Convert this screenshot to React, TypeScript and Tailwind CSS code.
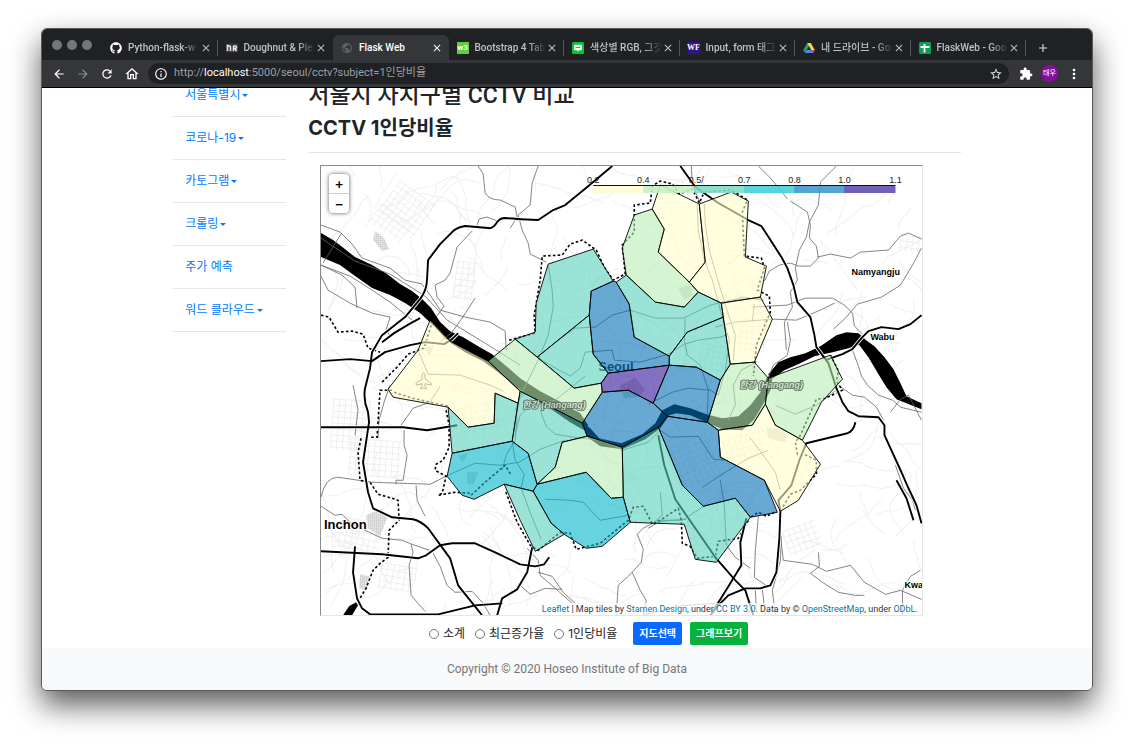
import React from "react";
import { FaGithub } from "react-icons/fa";
import {
  MdArrowBack,
  MdArrowForward,
  MdRefresh,
  MdOutlineHome,
  MdInfoOutline,
  MdStarBorder,
  MdExtension,
  MdMoreVert,
  MdClose,
  MdAdd,
  MdPublic,
} from "react-icons/md";

/* ---------- map data ---------- */

const YELLOW = "#ffffcc";
const GREEN = "#b9ecb2";
const TEAL = "#5ad0bc";
const CYAN = "#00b6ca";
const BLUE = "#0370b8";
const PURPLE = "#341399";

const districts: { name: string; fill: string; points: string }[] = [
  { name: "은평구", fill: TEAL, points: "548,264 593,249 613,281 591,291 589,315 537,357 515,339 535,332 536,303" },
  { name: "서대문구", fill: TEAL, points: "589,315 593,354 608,373 601,383 574,388 537,357" },
  { name: "종로구", fill: BLUE, points: "613,281 616,282 629,304 634,337 669,356 669,365 608,373 593,354 589,315 591,291" },
  { name: "강북구", fill: GREEN, points: "634,215 652,209 664,229 658,252 689,282 698,292 684,307 655,302 626,275 622,248" },
  { name: "도봉구", fill: YELLOW, points: "652,209 660,185 699,204 705,262 689,282 658,252 664,229" },
  { name: "노원구", fill: YELLOW, points: "699,204 731,192 748,201 745,257 766,266 760,297 721,303 698,292 689,282 705,262" },
  { name: "성북구", fill: TEAL, points: "616,282 626,275 655,302 684,307 698,292 721,303 723,317 687,332 669,356 634,337 629,304" },
  { name: "동대문구", fill: TEAL, points: "687,332 723,317 730,364 720,380 696,367 669,365 669,356" },
  { name: "중랑구", fill: YELLOW, points: "721,303 760,297 772,319 754,362 730,364 723,317" },
  { name: "광진구", fill: GREEN, points: "730,364 754,362 768,378 765,404 752,425 718,430 707,422 720,380" },
  { name: "강동구", fill: GREEN, points: "768,378 830,355 842,379 821,402 802,440 775,425 765,404" },
  { name: "송파구", fill: YELLOW, points: "765,404 775,425 802,440 820,464 798,500 780,511 764,480 720,457 718,430 752,425" },
  { name: "강남구", fill: BLUE, points: "658,427 667,416 707,422 718,430 720,457 764,480 777,512 750,517 735,498 703,506 682,485" },
  { name: "서초구", fill: TEAL, points: "658,427 682,485 703,506 735,498 750,517 747,521 716,562 695,559 684,524 630,522 623,497 622,447" },
  { name: "용산구", fill: BLUE, points: "602,392 628,390 653,403 667,416 658,427 622,447 587,436 582,423" },
  { name: "중구", fill: PURPLE, points: "608,373 669,365 653,403 628,390 602,392 601,383" },
  { name: "성동구", fill: BLUE, points: "669,365 696,367 720,380 707,422 667,416 653,403" },
  { name: "마포구", fill: GREEN, points: "515,339 537,357 574,388 601,383 602,392 582,423 520,391 488,361" },
  { name: "강서구", fill: YELLOW, points: "430,320 450,341 488,361 520,391 518,403 495,393 494,423 468,427 448,407 393,397 388,389 418,350" },
  { name: "양천구", fill: TEAL, points: "495,393 518,403 512,441 452,453 448,407 468,427 494,423" },
  { name: "구로구", fill: CYAN, points: "452,453 512,441 528,453 537,484 533,491 504,484 474,499 462,495 447,476" },
  { name: "영등포구", fill: TEAL, points: "518,403 520,391 582,423 587,436 562,442 555,467 537,484 528,453 512,441" },
  { name: "동작구", fill: GREEN, points: "587,436 622,447 623,497 611,498 586,472 537,484 555,467 562,442" },
  { name: "관악구", fill: CYAN, points: "533,491 537,484 586,472 611,498 623,497 630,522 602,546 586,548 564,534 551,523" },
  { name: "금천구", fill: TEAL, points: "504,484 533,491 551,523 564,534 535,551 520,520" },
];

const riverShapes = [
  "321,233 333,240 341,246 355,257 372,265 387,274 400,284 412,291 422,299 431,308 440,322 450,331 463,337 478,346 492,354 505,365 520,378 540,391 561,402 580,413 588,425 584,430 570,422 548,407 530,396 516,387 498,372 483,361 465,352 448,341 434,326 420,313 405,303 390,295 372,288 355,276 340,265 321,257",
  "584,424 590,428 599,438 621,443 642,434 655,423 662,410 674,404 690,408 706,414 722,418 738,416 750,405 760,392 766,378 771,374 772,386 764,402 754,419 742,430 722,429 706,422 690,415 676,413 669,415 660,428 645,439 622,449 600,446 586,436",
  "768,374 778,362 790,357 805,353 820,346 836,335 846,332 858,333 864,338 860,344 848,348 832,352 814,356 800,363 784,370 770,380",
  "856,341 863,338 874,346 884,357 893,369 900,383 906,396 921,403 921,409 906,403 896,399 886,387 878,374 868,357",
  "343,615 349,606 356,602 358,605 352,615",
];

const highways = [
  "M520 219 L505 218 Q500 218 497 222 Q493 229 488 228 L465 226 Q458 227 453 231 L440 244 L428 260 L427 278 Q427 290 420 299 L405 317 L382 335 L372 352 L370 368 L365 388 Q363 400 368 412 L369 422 L363 462 L368 492 L373 508 L392 517 L413 519 Q421 521 428 528 L450 558 L458 585 L482 615",
  "M515 219 L538 220 L553 210 L565 205 L587 187 L612 166",
  "M680 166 L695 187 L718 203 L748 220 L761 226 L772 243 L781 257 L787 268 L793 285 L797 302 L810 317 L814 335 L816 347 L828 363 L836 388 L842 402 L848 411 L858 416 L878 417 L884 425 L884 435 L901 472 L908 488 L916 505 L921 523",
  "M321 361 L350 359 L372 361 L385 352 L410 345 L425 342 L444 344 L452 339 L458 333",
  "M321 427 L403 427 L427 430 L457 425",
  "M321 551 L382 554 L418 558 L426 555 L440 545 L452 543 L475 543 L495 552 L520 564 L535 566 L544 564 L549 557",
  "M355 546 L353 572 L357 598 L362 608 L370 614 L438 614 L475 605 L502 603",
  "M497 615 L502 598 L517 589 L527 572 L532 547",
  "M780 511 L779 538 L776 572 L770 585 L760 588 L745 588 L728 595 L718 605 L710 615",
  "M658 435 L664 465 L675 499 L715 557 L735 580 L745 590 L753 615",
  "M746 518 L740 542 L741 565 L730 583 L712 612",
  "M855 422 Q853 431 847 433 L806 443 L799 460 L791 485 L778 500 L780 511",
  "M825 360 L842 354 L852 349 L861 338 L868 331 L881 327 L898 329 L910 324 L921 315",
  "M382 342 L394 333 L409 324 L420 318",
  "M896 480 L906 498 L913 520",
];

const roads = [
  "M478 166 L483 174 L485 193 Q489 200 500 200 L515 207 L517 217 L510 228",
  "M538 166 L532 183 L530 205 L518 215 L522 230 L528 243 L530 254 L546 262",
  "M476 228 L479 219 L487 217 L500 222",
  "M472 231 L457 247 L450 273 L445 280 L435 285 L437 297 L444 306 L436 317",
  "M321 225 L340 232 L352 244 L362 258 L390 268 L405 280 L422 284 L430 295 L440 310 L465 317 L490 322 L505 331 L506 350",
  "M321 238 L355 261 L390 274 L425 296 L447 320 L480 340 L520 365",
  "M321 265 L350 276 L372 290 L390 302 L412 320",
  "M321 276 L328 290 L350 303 L372 313 L390 317 L386 330 L391 337",
  "M321 265 L342 275 L355 287 L357 308",
  "M323 263 L341 234",
  "M475 298 L462 318 L452 332 L440 342",
  "M418 350 L428 374 L460 375 L490 385 L503 391",
  "M321 497 Q325 477 338 477 L372 482 L430 484 L448 475 L475 463 L500 465 L519 462 L540 449 L565 440",
  "M404 430 L404 445 L407 455 L403 480 L396 480 L396 484",
  "M401 425 L413 408 L430 402 L440 386",
  "M416 485 L417 500 L425 516",
  "M321 506 L335 515 L342 514 L350 522 L365 530 L382 538 L402 540 L412 544 L432 551 L440 566 L447 585 L455 592 L472 591 L483 603 L490 615",
  "M411 544 L413 552 L409 565 L411 595 L425 611",
  "M390 385 L384 402 L379 420 L378 438",
  "M353 385 L358 410 L355 435",
  "M548 265 L552 290 L553 307 L548 335 L538 360 L523 390 L515 410",
  "M537 357 L550 365 L570 376 L580 368 L585 352 L612 350 L614 360 L640 362 L668 354 L684 344 L698 340 L720 337 L728 334",
  "M558 340 L575 328 L595 327 L612 315 L630 310 L655 318 L683 318 L710 305 L730 300 L760 298",
  "M685 318 L684 340 L687 355 L700 365 L708 390 L707 415",
  "M697 204 L698 230 L704 260 L712 280 L720 310 L729 340 L725 370 L718 395",
  "M704 204 L705 225 L709 250 L716 275 L725 305 L735 335 L733 360",
  "M691 166 L692 185 L700 203",
  "M758 166 L770 178 L780 190 L787 199",
  "M836 166 L820 182 L818 205 L809 222 L806 237 L799 250 L795 268 L797 280 L790 292 L792 307 L784 322 L786 350",
  "M790 201 L807 212 L810 225 L809 238 L816 246 L818 258 L810 266 L798 266 L790 263 L779 265 L769 271 L764 281",
  "M817 257 L830 254 L850 258 L860 252 L888 250 L900 236 L908 233 L921 239",
  "M921 248 L912 265 L900 285 L881 297 L857 304 L845 318 L833 329",
  "M752 307 L787 305 L805 298 L832 298 L844 305 L852 313 L854 326 L862 334",
  "M772 319 L796 320 L820 310 L834 303",
  "M721 304 L742 297 L763 300",
  "M715 327 L735 322 L772 319",
  "M754 304 L752 321",
  "M768 378 L773 365 L787 355 L790 340 L787 322",
  "M852 350 L858 366 L861 376 L867 385 L878 395 L892 400 L900 407 L921 412",
  "M838 385 L852 395 L864 397 L876 407 L883 420",
  "M890 412 L900 399 L908 395 L921 420",
  "M540 410 L546 426 L555 434 L580 438 L605 440 L622 450 L648 442 L660 430",
  "M515 435 L520 415 L530 405 L555 400 L585 376",
  "M512 441 L515 460 L524 474 L521 488 L531 515 L541 539",
  "M502 470 L506 455 L515 440 L517 418",
  "M657 428 L670 437 L698 436 L713 459 L724 460",
  "M705 505 L682 520 L657 520 L643 528 L637 534 L643 549 L641 562 L628 576 L618 585 L616 615",
  "M655 521 L662 515 L660 492",
  "M648 528 L658 522 L670 520 L686 519",
  "M632 572 L640 590 L646 600 L643 615",
  "M527 548 L538 560 L540 575 L555 588 L572 603",
  "M538 572 L552 576 L563 592 L575 603",
  "M520 585 L530 594 L545 588 L562 589",
  "M702 487 L725 472 L748 458 L768 450",
  "M749 437 L760 451 L775 472 L780 490",
  "M728 420 L735 405 L733 385 L741 370 L756 362",
  "M775 405 L795 414 L816 405 L836 390",
  "M720 480 L724 505 L726 545 L735 557 L750 568",
  "M758 516 L755 550 L754 577 L767 586",
  "M781 536 L780 560 L772 590 L775 615",
  "M780 536 L783 560 L812 564 L826 571 L850 565 L864 582 L885 594 L900 590 L921 599",
  "M818 552 L819 566 L810 573 L822 582 L838 592 L855 595 L864 595",
  "M902 615 L902 590 L910 576 L920 570",
  "M755 590 L756 610 M762 589 L765 615",
  "M895 465 L903 488 L912 500 L915 510",
  "M643 615 L665 609 L682 605 L715 603",
  "M648 404 L672 392 L688 388 L710 390 L718 395",
  "M545 499 L571 500 L583 502 L600 520 L628 515",
];

const borders = [
  "M321 315 L329 317 L338 332 L352 331 L363 334 L368 348 L380 352",
  "M382 382 L398 366 L408 354 L424 348 L432 322",
  "M392 390 L380 390 L377 437 L370 437",
  "M394 392 L412 398 L448 406",
  "M446 410 L449 425 L449 447 L443 460 L436 464 L435 470 L446 476 L442 493 L438 495 L455 492 L471 493",
  "M361 438 L358 452 L360 480 L370 482 L378 494 L392 498 L398 500 L399 520 L389 530 L388 557 L380 563 L373 570 L366 588 L358 601",
  "M509 340 L535 333 L534 315 L540 280 L542 256 L562 255 L570 244 L582 240 L596 250 L604 267 L613 280 L625 274 L622 245 L634 232 L634 205 L650 203 L652 186 L660 181 L672 184 L679 194 L692 189 L699 203 L704 192 L731 190 L747 200 L742 212 L744 256 L761 258 L764 268 L757 290 L769 296 L770 312 L756 345 L753 376",
  "M830 355 L838 371 L836 381 L842 390 L825 398 L816 399 L800 435 L795 442 L797 454 L806 455 L816 460 L816 474 L800 490 L790 494 L780 511",
  "M774 512 L766 516 L758 512 L750 517",
  "M748 520 L738 538 L718 541 L715 556 L697 558 L690 546 L682 543 L681 520 L678 508 L660 520 L652 524 L643 506 L633 507 L628 520 L612 533 L600 543 L576 549 L570 533 L560 532 L538 550 L530 545 L517 522 L505 490",
  "M471 495 L485 482 L505 465 L511 475",
];

const parks = [
  "375,231 384,238 389,249 382,251 373,240",
  "366,515 382,508 387,518 380,536 368,528",
  "360,574 369,576 367,590 359,588",
  "678,288 690,285 692,295 684,300",
  "619,386 635,377 645,390 637,397 624,398",
  "766,427 784,430 785,442 768,438",
  "458,455 468,453 462,463",
  "467,472 478,472 474,484 467,484",
  "425,348 434,345 429,356",
  "520,385 530,390 522,397",
];

/* Faint side streets: short walks from a fixed seed, so every render is alike. */
function sideStreets(): string {
  let seed = 1907;
  const rnd = () => {
    seed = (seed * 16807) % 2147483647;
    return seed / 2147483647;
  };
  const parts: string[] = [];
  for (let i = 0; i < 300; i++) {
    let x = 325 + rnd() * 590;
    let y = 170 + rnd() * 440;
    let a = rnd() * Math.PI * 2;
    let d = `M${x.toFixed(0)} ${y.toFixed(0)}`;
    const steps = 3 + Math.floor(rnd() * 6);
    for (let s = 0; s < steps; s++) {
      a += (rnd() - 0.5) * 1.1;
      x += Math.cos(a) * 9;
      y += Math.sin(a) * 9;
      d += ` L${x.toFixed(1)} ${y.toFixed(1)}`;
    }
    parts.push(d);
  }
  return parts.join(" ");
}

const sideStreetPath = sideStreets();

/* Gridded neighbourhoods: x, y, width, height, turn */
const blocks = [
  [385, 190, 44, 38, 35],
  [372, 212, 36, 22, 35],
  [332, 400, 38, 50, 4],
  [350, 440, 50, 36, 4],
  [455, 262, 18, 38, 8],
  [672, 440, 44, 46, -22],
  [725, 436, 36, 26, -15],
  [785, 525, 34, 26, -20],
  [340, 520, 40, 30, 12],
  [460, 405, 40, 26, -10],
  [700, 345, 24, 26, 10],
  [740, 320, 26, 30, 4],
  [900, 236, 20, 16, 8],
  [380, 565, 34, 26, 10],
];

const legend = [
  { x: 593, fill: "#fffcd0" },
  { x: 643, fill: "#c4f0c4" },
  { x: 694, fill: "#7fdcc8" },
  { x: 744, fill: "#45cfd8" },
  { x: 794, fill: "#4398d0" },
  { x: 844, fill: "#6250b4" },
];
const legendTicks = [
  ["0.2", 593],
  ["0.4", 643],
  ["0.5/", 696],
  ["0.7", 744],
  ["0.8", 794],
  ["1.0", 844],
  ["1.1", 895],
] as const;

function SeoulMap() {
  return (
    <svg viewBox="321 166 600 449" className="block w-full" role="img" aria-label="서울시 자치구별 CCTV 지도">
      <defs>
        <pattern id="dots" width="2" height="2" patternUnits="userSpaceOnUse">
          <rect width="2" height="2" fill="#e4e4e4" />
          <rect width="1" height="1" fill="#c4c4c4" />
        </pattern>
      </defs>
      <rect x="321" y="166" width="600" height="449" fill="#fff" />
      <path d={sideStreetPath} fill="none" stroke="#f0f0f0" strokeWidth="1" />
      {blocks.map(([x, y, w, h, t], i) => (
        <g key={i} transform={`rotate(${t} ${x + w / 2} ${y + h / 2})`} stroke="#ececec" strokeWidth="0.8">
          {Array.from({ length: Math.floor(w / 6) + 1 }, (_, k) => (
            <line key={`v${k}`} x1={x + k * 6} x2={x + k * 6} y1={y} y2={y + h} />
          ))}
          {Array.from({ length: Math.floor(h / 6) + 1 }, (_, k) => (
            <line key={`h${k}`} x1={x} x2={x + w} y1={y + k * 6} y2={y + k * 6} />
          ))}
        </g>
      ))}
      {parks.map((p) => (
        <polygon key={p} points={p} fill="url(#dots)" />
      ))}
      {riverShapes.map((p) => (
        <polygon key={p} points={p} fill="#000" />
      ))}
      <g fill="none" stroke="#666" strokeWidth="0.8" strokeLinejoin="round">
        {roads.map((d) => (
          <path key={d} d={d} />
        ))}
      </g>
      <g fill="none" stroke="#000" strokeWidth="1.6" strokeDasharray="2.6 2.2">
        {borders.map((d) => (
          <path key={d} d={d} />
        ))}
      </g>
      <g fill="none" strokeLinejoin="round">
        {highways.map((d) => (
          <path key={`c${d}`} d={d} stroke="#fff" strokeWidth="3.6" />
        ))}
        {highways.map((d) => (
          <path key={d} d={d} stroke="#000" strokeWidth="1.9" />
        ))}
      </g>
      <path
        d="M423.500 373 Q425 373 425 376 L425 379 L431 383 L431 385 L425 383.500 L424.800 386 L426.500 387.500 L426.500 388.500 L423.500 387.800 L420.500 388.500 L420.500 387.500 L422.200 386 L422 383.500 L416 385 L416 383 L422 379 L422 376 Q422 373 423.500 373z"
        fill="#fff"
        stroke="#444"
        strokeWidth="0.9"
      />
      <text x="598" y="371" className="fill-[#222] font-[Liberation_Sans] text-[13px] font-bold">Seoul</text>
      <g stroke="#000" strokeWidth="0.9" strokeLinejoin="round" fillOpacity="0.6">
        {districts.map((d) => (
          <polygon key={d.name} points={d.points} fill={d.fill} />
        ))}
      </g>
      <g
        className="fill-[#cfe0cf] stroke-[#5b6b5b] font-['Liberation_Sans','Noto_Sans_CJK_KR'] text-[9px] font-bold italic"
        strokeWidth="2"
        paintOrder="stroke"
        strokeLinejoin="round"
        opacity="0.85"
      >
        <text x="522" y="408">한강 (Hangang)</text>
        <text x="739" y="388">한강 (Hangang)</text>
      </g>
      <g className="fill-black stroke-white font-[Liberation_Sans] font-bold" strokeWidth="2" paintOrder="stroke">
        <text x="324" y="529" className="text-[13px]">Inchon</text>
        <text x="851" y="275" className="text-[9px]">Namyangju</text>
        <text x="870" y="340" className="text-[9px]">Wabu</text>
        <text x="904" y="588" className="text-[9px]">Kwa</text>
      </g>
      <g>
        {legend.map((s) => (
          <rect key={s.x} x={s.x} y="186" width="51" height="7" fill={s.fill} fillOpacity="0.9" />
        ))}
        <line x1="593" x2="895" y1="185.500" y2="185.500" stroke="#111" strokeWidth="1" />
        {legendTicks.map(([label, x]) => (
          <text key={label} x={x} y="183" textAnchor="middle" className="fill-[#222] font-[Liberation_Sans] text-[9px]">
            {label}
          </text>
        ))}
      </g>
    </svg>
  );
}

/* ---------- favicons ---------- */

function BookIcon() {
  return (
    <svg viewBox="0 0 12 12" className="size-3 shrink-0">
      <path d="M0 2 L6 1.500 L12 2 V10 L6 10.500 L0 10z" fill="#3f4043" />
      <path d="M1.500 9V3.500c2 0 3 .5 3 2V9M7.500 9V4M7.500 4h1.500c2 0 2 2.500 0 2.500h-1.500M9 6.500L10.500 9" fill="none" stroke="#e8e8e8" strokeWidth="1.500" />
    </svg>
  );
}
function GreenBadge({ children }: { children: React.ReactNode }) {
  return (
    <span className="flex size-3 shrink-0 items-center justify-center bg-[#5fcf3c] text-[8px] font-bold text-white">
      {children}
    </span>
  );
}
function ChatIcon() {
  return (
    <svg viewBox="0 0 12 12" className="size-3 shrink-0">
      <rect width="12" height="12" rx="1.500" fill="#06c53a" />
      <path d="M3 2.800h6a1 1 0 0 1 1 1v3.400a1 1 0 0 1-1 1H7L6 9.800 5 8.200H3a1 1 0 0 1-1-1V3.800a1 1 0 0 1 1-1z" fill="#fff" />
      <path d="M3.800 5.500h4.400" stroke="#06c53a" strokeWidth="1.200" />
    </svg>
  );
}
function DriveIcon() {
  return (
    <svg viewBox="0 0 12 12" className="size-3 shrink-0">
      <path d="M4.200 1h3.600L6 4.200 2 11 0.200 8z" fill="#1fa463" />
      <path d="M4.200 1h3.600l4 7H8.200z" fill="#ffd04b" />
      <path d="M3.900 8h7.900L10 11H2.100z" fill="#4688f4" />
      <path d="M8.200 8h3.600L10 11z" fill="#e34133" />
    </svg>
  );
}
function SheetIcon() {
  return (
    <svg viewBox="0 0 12 12" className="size-3 shrink-0">
      <rect width="12" height="12" rx="1.200" fill="#0f9d58" />
      <path d="M5.500 2v8.500M1.500 5h9" stroke="#fff" strokeWidth="1.800" />
    </svg>
  );
}

const tabs: { title: string; icon: React.ReactNode; active?: boolean }[] = [
  { title: "Python-flask-w", icon: <FaGithub className="size-3 shrink-0 text-white" /> },
  { title: "Doughnut & Pie", icon: <BookIcon /> },
  { title: "Flask Web", icon: <MdPublic className="size-3 shrink-0 text-[#5f6165]" />, active: true },
  { title: "Bootstrap 4 Tab", icon: <GreenBadge>w3</GreenBadge> },
  { title: "색상별 RGB, 그것", icon: <ChatIcon /> },
  {
    title: "Input, form 태그",
    icon: (
      <span className="flex size-3 shrink-0 items-center justify-center bg-[#32148c] font-['Liberation_Serif'] text-[8px] font-bold text-white">
        WF
      </span>
    ),
  },
  { title: "내 드라이브 - Goo", icon: <DriveIcon /> },
  { title: "FlaskWeb - Goo", icon: <SheetIcon /> },
];

function TabStrip() {
  return (
    <div className="flex h-[31px] items-end bg-[#202124] pr-[66px] font-[Roboto,'Noto_Sans_CJK_KR',sans-serif]">
      <div className="flex w-[60px] shrink-0 gap-[5px] self-center pl-2.5">
        {["close", "minimise", "zoom"].map((n) => (
          <button key={n} aria-label={n} className="size-2.5 rounded-full bg-[#76777a]" />
        ))}
      </div>
      <div role="tablist" className="relative flex min-w-0 flex-1">
        {tabs.map((t, i) => (
          <div
            key={t.title}
            role="tab"
            aria-selected={!!t.active}
            className={
              t.active
                ? "relative flex h-[25px] min-w-0 flex-1 items-center rounded-t-md bg-[#35363a] pr-1.5 pl-2"
                : "relative flex h-[25px] min-w-0 flex-1 items-center pr-1.5 pl-2"
            }
          >
            {t.icon}
            <span
              className={
                t.active
                  ? "ml-1.5 min-w-0 flex-1 text-[10px] font-medium whitespace-nowrap text-white"
                  : "ml-1.5 min-w-0 flex-1 [mask-image:linear-gradient(to_right,#000_75%,transparent)] text-[10px] font-medium whitespace-nowrap text-[#bdc1c6]"
              }
            >
              {t.title}
            </span>
            <button aria-label="탭 닫기" className={t.active ? "text-white" : "text-[#bdc1c6]"}>
              <MdClose className="size-3" />
            </button>
            {!t.active && i !== 1 && <span className="absolute right-0 h-4 w-px bg-[#54565a]" />}
          </div>
        ))}
        <button aria-label="새 탭" className="absolute top-1.5 left-full ml-2.5 text-[#dadce0]">
          <MdAdd className="size-3.5" />
        </button>
      </div>
    </div>
  );
}

function Toolbar() {
  return (
    <div className="flex h-7 items-center border-b border-black bg-[#35363a] px-2.5 font-[Roboto,'Noto_Sans_CJK_KR',sans-serif] text-white">
      <button aria-label="뒤로" className="mr-2.5">
        <MdArrowBack className="size-3.5" />
      </button>
      <button aria-label="앞으로" className="mr-2.5 text-[#8b8c8f]">
        <MdArrowForward className="size-3.5" />
      </button>
      <button aria-label="새로고침" className="mr-2.5">
        <MdRefresh className="size-3.5" />
      </button>
      <button aria-label="홈" className="mr-2">
        <MdOutlineHome className="size-4" />
      </button>
      <div className="flex h-[21px] min-w-0 flex-1 items-center rounded-full bg-[#202124] px-1.5">
        <MdInfoOutline className="size-3.5" />
        <span className="ml-1.5 flex-1 text-[11px] text-[#9aa0a6]">
          http://<span className="text-white">localhost</span>:5000/seoul/cctv?subject=1인당비율
        </span>
        <button aria-label="북마크">
          <MdStarBorder className="size-3.5 text-[#dadce0]" />
        </button>
      </div>
      <button aria-label="확장 프로그램" className="ml-2.5">
        <MdExtension className="size-3.5" />
      </button>
      <button className="ml-2 size-[17px] rounded-full bg-[#8a0ba0] text-[7px] whitespace-nowrap">태우</button>
      <button aria-label="메뉴" className="ml-2">
        <MdMoreVert className="size-4" />
      </button>
    </div>
  );
}

const menu = [
  { label: "서울특별시", caret: true },
  { label: "코로나-19", caret: true },
  { label: "카토그램", caret: true },
  { label: "크롤링", caret: true },
  { label: "주가 예측", caret: false },
  { label: "워드 클라우드", caret: true },
];

export default function App() {
  return (
    <div className="flex min-h-screen flex-col bg-white px-[41px] pt-7 pb-[55px] font-[Inter,'Noto_Sans_CJK_KR',sans-serif]">
      <div className="flex flex-1 flex-col overflow-hidden rounded-md border border-[#5a5a5a] bg-white shadow-[0_14px_30px_rgba(0,0,0,0.65)]">
        <TabStrip />
        <Toolbar />
        <div className="flex-1 overflow-hidden">
          <div className="mx-auto -mt-3.5 flex w-3/4 items-start">
            <nav className="w-[113px] shrink-0">
              <ul>
                {menu.map((m) => (
                  <li key={m.label} className="flex h-[43px] items-center border-b border-[#e6e6e6] pl-3">
                    <a href="#menu" className="flex items-center gap-0.5 text-[12px] whitespace-nowrap text-[#007bff]">
                      {m.label}
                      {m.caret && (
                        <span className="border-x-[3px] border-t-[3px] border-x-transparent border-t-[#007bff]" />
                      )}
                    </a>
                  </li>
                ))}
              </ul>
            </nav>
            <main className="ml-[22px] min-w-0 flex-1">
              <h1 className="mt-1.5 font-[Roboto,'Noto_Sans_CJK_KR',sans-serif] text-[23px] leading-8 font-medium text-[#212529]">
                서울시 자치구별 CCTV 비교
              </h1>
              <h2 className="text-[20px] leading-8 font-bold text-[#212529]">CCTV 1인당비율</h2>
              <hr className="mt-2 border-[#e5e5e5]" />
              <div className="relative mt-3 mr-[38px] ml-3 border border-[#e6e6e6] border-t-[#8a8a8a] border-l-[#8a8a8a]">
                <SeoulMap />
                <div className="absolute top-2 left-2 flex w-5 flex-col rounded-sm bg-white text-[14px] leading-[19px] font-medium text-black shadow-[0_0_4px_rgba(0,0,0,0.65)]">
                  <button aria-label="확대" className="h-5 border-b border-[#ccc]">
                    +
                  </button>
                  <button aria-label="축소" className="h-[19px]">
                    −
                  </button>
                </div>
                <p className="absolute right-0 bottom-0 bg-white/70 px-1 font-[Roboto,sans-serif] text-[9px] leading-3 whitespace-nowrap text-[#333]">
                  <a href="#leaflet" className="text-[#0078a8]">Leaflet</a> | Map tiles by{" "}
                  <a href="#stamen" className="text-[#0078a8]">Stamen Design</a>, under{" "}
                  <a href="#cc" className="text-[#0078a8]">CC BY 3.0</a>. Data by ©{" "}
                  <a href="#osm" className="text-[#0078a8]">OpenStreetMap</a>, under{" "}
                  <a href="#odbl" className="text-[#0078a8]">ODbL</a>.
                </p>
              </div>
              <form
                className="flex items-center justify-center pt-1.5 pr-[92px] text-[12px] text-[#212529]"
                onSubmit={(e) => e.preventDefault()}
              >
                {["소계", "최근증가율", "1인당비율"].map((l) => (
                  <label key={l} className="mr-2.5 flex items-center gap-1 whitespace-nowrap">
                    <input
                      type="radio"
                      name="subject"
                      className="size-2.5 appearance-none rounded-full border border-[#767676] bg-white checked:bg-[#007bff]"
                    />
                    {l}
                  </label>
                ))}
                <button className="ml-1.5 h-[23px] rounded-xs bg-[#0b69ff] px-1.5 text-[10px] font-bold text-white">
                  지도선택
                </button>
                <button className="ml-2 h-[23px] rounded-xs bg-[#06b13e] px-1.5 text-[10px] font-bold text-white">
                  그래프보기
                </button>
              </form>
            </main>
          </div>
        </div>
        <footer className="flex h-[42px] shrink-0 items-center justify-center bg-[#f8f9fa] font-[Roboto,sans-serif] text-[12px] text-[#777]">
          Copyright © 2020 Hoseo Institute of Big Data
        </footer>
      </div>
    </div>
  );
}
